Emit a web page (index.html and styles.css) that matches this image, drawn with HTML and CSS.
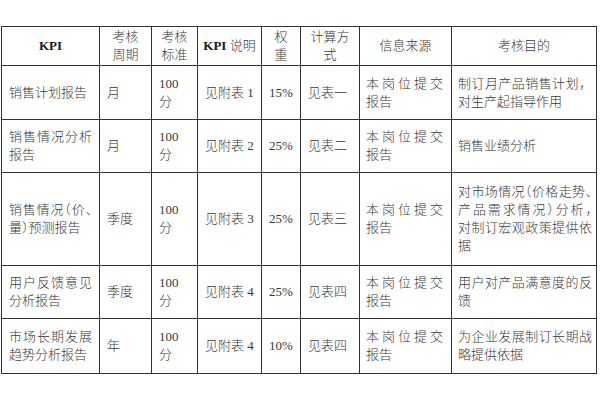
FILE: index.html
```html
<!DOCTYPE html>
<html lang="zh-CN">
<head>
<meta charset="utf-8">
<title>KPI 考核表</title>
<link rel="stylesheet" href="styles.css">
</head>
<body>
<div class="page">
<table class="kpi">
  <colgroup>
    <col class="c1"><col class="c2"><col class="c3"><col class="c4"><col class="c5"><col class="c6"><col class="c7"><col class="c8">
  </colgroup>
  <thead>
    <tr class="r-head">
      <th><span class="latin">KPI</span></th>
      <th>考核<br>周期</th>
      <th>考核<br>标准</th>
      <th><span class="latin">KPI</span> 说明</th>
      <th>权<br>重</th>
      <th>计算方<br>式</th>
      <th>信息来源</th>
      <th>考核目的</th>
    </tr>
  </thead>
  <tbody>
    <tr class="r1">
      <td>销售计划报告</td>
      <td>月</td>
      <td>100<br>分</td>
      <td>见附表 1</td>
      <td>15%</td>
      <td>见表一</td>
      <td class="src"><span class="j">本岗位提交</span><span class="l">报告</span></td>
      <td class="goal"><span class="j">制订月产品销售计划，</span><span class="l">对生产起指导作用</span></td>
    </tr>
    <tr class="r2">
      <td><span class="j">销售情况分析</span><span class="l">报告</span></td>
      <td>月</td>
      <td>100<br>分</td>
      <td>见附表 2</td>
      <td>25%</td>
      <td>见表二</td>
      <td class="src"><span class="j">本岗位提交</span><span class="l">报告</span></td>
      <td class="goal">销售业绩分析</td>
    </tr>
    <tr class="r3">
      <td><span class="j halt">销售情况（价、</span><span class="l halt">量）预测报告</span></td>
      <td>季度</td>
      <td>100<br>分</td>
      <td>见附表 3</td>
      <td>25%</td>
      <td>见表三</td>
      <td class="src"><span class="j">本岗位提交</span><span class="l">报告</span></td>
      <td class="goal"><span class="j halt">对市场情况（价格走势、</span><span class="j halt">产品需求情况）分析，</span><span class="j">对制订宏观政策提供依</span><span class="l">据</span></td>
    </tr>
    <tr class="r4">
      <td><span class="j">用户反馈意见</span><span class="l">分析报告</span></td>
      <td>季度</td>
      <td>100<br>分</td>
      <td>见附表 4</td>
      <td>25%</td>
      <td>见表四</td>
      <td class="src"><span class="j">本岗位提交</span><span class="l">报告</span></td>
      <td class="goal"><span class="j">用户对产品满意度的反</span><span class="l">馈</span></td>
    </tr>
    <tr class="r5">
      <td><span class="j">市场长期发展</span><span class="l">趋势分析报告</span></td>
      <td>年</td>
      <td>100<br>分</td>
      <td>见附表 4</td>
      <td>10%</td>
      <td>见表四</td>
      <td class="src"><span class="j">本岗位提交</span><span class="l">报告</span></td>
      <td class="goal"><span class="j">为企业发展制订长期战</span><span class="l">略提供依据</span></td>
    </tr>
  </tbody>
</table>
</div>
</body>
</html>
```

FILE: styles.css
```css
html, body {
  margin: 0;
  padding: 0;
  background: #ffffff;
}

.page {
  padding: 26px 0 0 1px;
}

.kpi {
  border-collapse: collapse;
  table-layout: fixed;
  width: 596px;
  font-family: "Liberation Serif", "Noto Sans CJK SC", serif;
  font-size: 13px;
  line-height: 18px;
  color: #383838;
}

.kpi .c1 { width: 98px; }
.kpi .c2 { width: 52px; }
.kpi .c3 { width: 46px; }
.kpi .c4 { width: 64px; }
.kpi .c5 { width: 39px; }
.kpi .c6 { width: 59px; }
.kpi .c7 { width: 92px; }
.kpi .c8 { width: 145px; }

.kpi th,
.kpi td {
  border: 1px solid #333333;
  padding: 0 7px;
  vertical-align: middle;
  text-align: left;
  font-weight: 300;
  white-space: nowrap;
}

.kpi th {
  text-align: center;
  padding: 0 2px;
}

.kpi .latin {
  color: #1a1a1a;
  font-weight: 700;
}

.kpi td.src {
  padding: 0 8px 0 6px;
}

.kpi td.goal {
  padding: 0 4px 0 6px;
}

.r-head { height: 39px; }
.r1 { height: 54px; }
.r2 { height: 53px; }
.r3 { height: 93px; }
.r4 { height: 53px; }
.r5 { height: 55px; }

.j {
  display: block;
  text-align: justify;
  text-align-last: justify;
}

.l {
  display: block;
}

.halt {
  font-feature-settings: "halt" 1;
}
```
